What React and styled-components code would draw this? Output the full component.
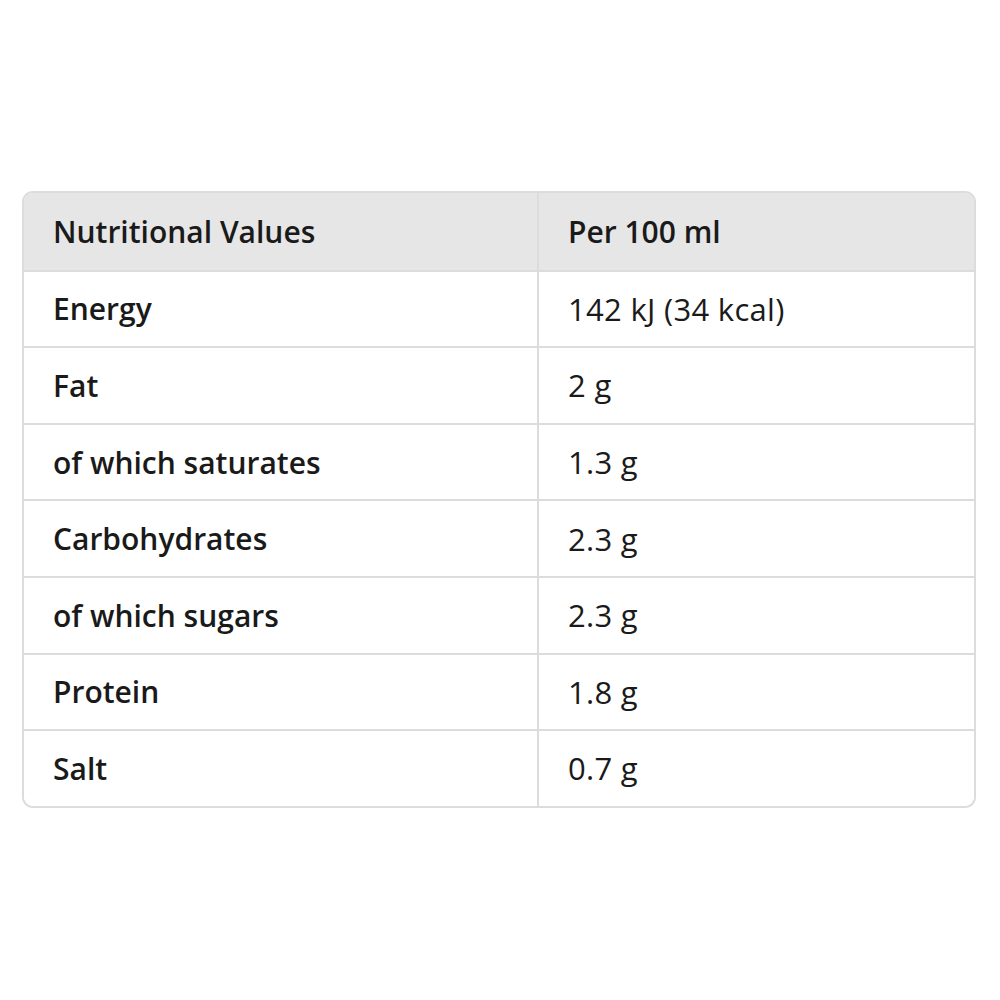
import React from "react"
import styled, { createGlobalStyle } from "styled-components"

const rows = [
    ["Energy", "142 kJ (34 kcal)"],
    ["Fat", "2 g"],
    ["of which saturates", "1.3 g"],
    ["Carbohydrates", "2.3 g"],
    ["of which sugars", "2.3 g"],
    ["Protein", "1.8 g"],
    ["Salt", "0.7 g"],
]

export default function App() {
    return (
        <>
            <GlobalStyle />
            <Page>
                <Table>
                    <Row header>
                        <Cell header first>Nutritional Values</Cell>
                        <Cell header>Per 100 ml</Cell>
                    </Row>
                    {rows.map(([label, value]) => (
                        <Row key={label}>
                            <Cell first>{label}</Cell>
                            <Cell>{value}</Cell>
                        </Row>
                    ))}
                </Table>
            </Page>
        </>
    )
}

const GlobalStyle = createGlobalStyle`
    body {
        margin: 0;
        background: #ffffff;
        font-family: "Open Sans", "Noto Sans", sans-serif;
        color: #1a1a1a;
    }
`

const Page = styled.div`
    width: 1000px;
    height: 1000px;
    padding: 191px 24px 0 22px;
    box-sizing: border-box;
`

const Table = styled.div`
    border: 2px solid #dcdcdc;
    border-radius: 11px;
    overflow: hidden;
`

const Row = styled.div`
    display: grid;
    grid-template-columns: 515px 1fr;
    height: 76.6px;
    box-sizing: border-box;
    background: ${p => p.header ? "#e6e6e6" : "#ffffff"};
    & + & {
        border-top: 2px solid #dcdcdc;
    }
`

const Cell = styled.div`
    display: flex;
    align-items: center;
    padding-left: 29px;
    font-size: ${p => p.header || p.first ? "30px" : "31px"};
    font-weight: ${p => p.header || p.first ? 600 : 400};
    letter-spacing: ${p => p.header || p.first ? "0" : "0.3px"};
    border-right: ${p => p.first ? "2px solid #dcdcdc" : "none"};
`
